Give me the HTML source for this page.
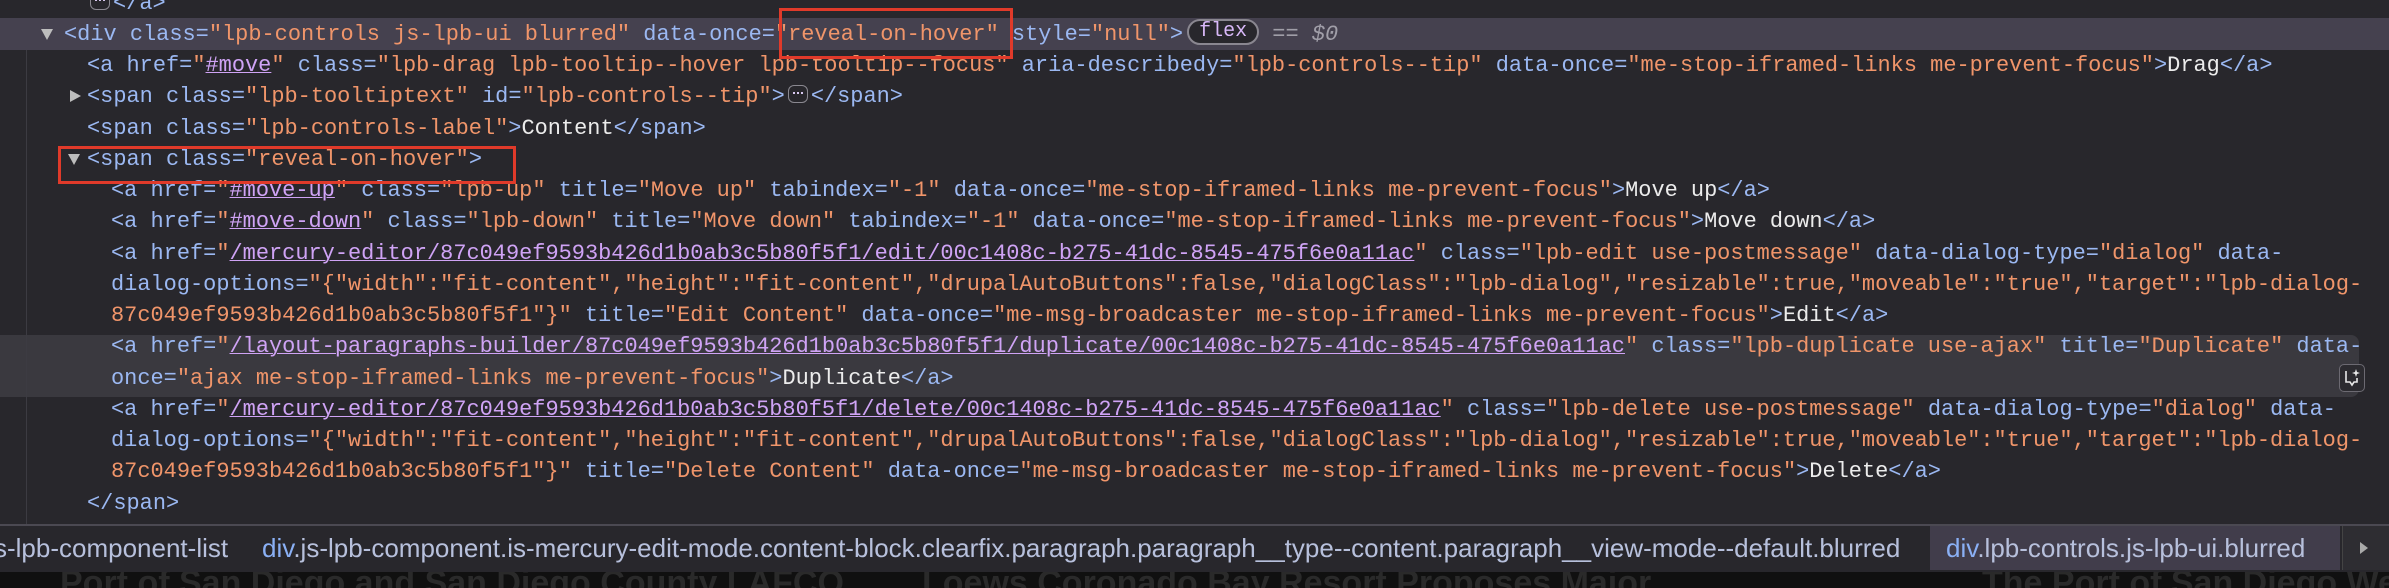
<!DOCTYPE html>
<html><head><meta charset="utf-8"><style>
html,body{margin:0;padding:0;width:2389px;height:588px;overflow:hidden;}
body{background:#28272c;position:relative;font-family:"Liberation Mono",monospace;font-size:21.95px;}
.r{position:absolute;left:0;right:0;height:31.27px;line-height:31.27px;white-space:pre;color:#e6e6e6;}
.t{color:#9bb8f2}.n{color:#9bb8f2}.v{color:#f0956a}.h{color:#cfa3f5;text-decoration:underline;text-decoration-thickness:1px}.x{color:#ececec}
.tri{position:absolute;width:0;height:0;border-left:6px solid transparent;border-right:6px solid transparent;border-top:11px solid #bdbdbd;top:10px}
.trir{position:absolute;width:0;height:0;border-top:6px solid transparent;border-bottom:6px solid transparent;border-left:11px solid #bdbdbd;top:9px}
.ell{display:inline-block;width:20px;height:18px;border:1.5px solid #8a8890;border-radius:6px;vertical-align:middle;position:relative;top:-2px;box-sizing:border-box;margin:0 3px}
.ell::after{content:"";position:absolute;left:4px;top:6px;width:2px;height:2px;background:#d8c8f0;box-shadow:4px 0 0 #d8c8f0,8px 0 0 #d8c8f0}
.box{position:absolute;border:3px solid #e03a2a;box-sizing:border-box}
.bc{position:absolute;top:0;white-space:nowrap}
</style></head><body>
<div style="position:absolute;left:0;right:0;top:18px;height:32px;background:#45414f"></div>
<div style="position:absolute;left:0;right:30px;top:335px;height:62px;background:#3a393f;border-radius:0 8px 8px 0"></div>
<div style="position:absolute;left:26px;top:50px;width:1px;height:475px;background:#3c3b42"></div>

<div class="r" style="top:-12px;left:87px"><span class="ell"></span><span class="t">&lt;/a&gt;</span></div>

<div class="r" style="top:19px"><div class="tri" style="left:41px"></div><span style="position:absolute;left:64px"><span class="t">&lt;div </span><span class="n">class</span><span class="t">=</span><span class="v">"lpb-controls js-lpb-ui blurred"</span> <span class="n">data-once</span><span class="t">=</span><span class="v">"reveal-on-hover"</span> <span class="n">style</span><span class="t">=</span><span class="v">"null"</span><span class="t">&gt;</span><span style="display:inline-block;border:2px solid #8a8790;border-radius:14px;background:#28272c;color:#d8b8f8;font-size:20px;line-height:22px;padding:0 10px;margin-left:4px;vertical-align:middle;position:relative;top:-2px">flex</span><span style="color:#a09ea8"> == <i>$0</i></span></span></div>

<div class="r" style="top:50px;left:87px"><span class="t">&lt;a </span><span class="n">href</span><span class="t">=</span><span class="v">"</span><span class="h">#move</span><span class="v">"</span> <span class="n">class</span><span class="t">=</span><span class="v">"lpb-drag lpb-tooltip--hover lpb-tooltip--focus"</span> <span class="n">aria-describedy</span><span class="t">=</span><span class="v">"lpb-controls--tip"</span> <span class="n">data-once</span><span class="t">=</span><span class="v">"me-stop-iframed-links me-prevent-focus"</span><span class="t">&gt;</span><span class="x">Drag</span><span class="t">&lt;/a&gt;</span></div>

<div class="r" style="top:81px"><div class="trir" style="left:70px"></div><span style="position:absolute;left:87px"><span class="t">&lt;span </span><span class="n">class</span><span class="t">=</span><span class="v">"lpb-tooltiptext"</span> <span class="n">id</span><span class="t">=</span><span class="v">"lpb-controls--tip"</span><span class="t">&gt;</span><span class="ell"></span><span class="t">&lt;/span&gt;</span></span></div>

<div class="r" style="top:113px;left:87px"><span class="t">&lt;span </span><span class="n">class</span><span class="t">=</span><span class="v">"lpb-controls-label"</span><span class="t">&gt;</span><span class="x">Content</span><span class="t">&lt;/span&gt;</span></div>

<div class="r" style="top:144px"><div class="tri" style="left:68px"></div><span style="position:absolute;left:87px"><span class="t">&lt;span </span><span class="n">class</span><span class="t">=</span><span class="v">"reveal-on-hover"</span><span class="t">&gt;</span></span></div>

<div class="r" style="top:175px;left:111px"><span class="t">&lt;a </span><span class="n">href</span><span class="t">=</span><span class="v">"</span><span class="h">#move-up</span><span class="v">"</span> <span class="n">class</span><span class="t">=</span><span class="v">"lpb-up"</span> <span class="n">title</span><span class="t">=</span><span class="v">"Move up"</span> <span class="n">tabindex</span><span class="t">=</span><span class="v">"-1"</span> <span class="n">data-once</span><span class="t">=</span><span class="v">"me-stop-iframed-links me-prevent-focus"</span><span class="t">&gt;</span><span class="x">Move up</span><span class="t">&lt;/a&gt;</span></div>

<div class="r" style="top:206px;left:111px"><span class="t">&lt;a </span><span class="n">href</span><span class="t">=</span><span class="v">"</span><span class="h">#move-down</span><span class="v">"</span> <span class="n">class</span><span class="t">=</span><span class="v">"lpb-down"</span> <span class="n">title</span><span class="t">=</span><span class="v">"Move down"</span> <span class="n">tabindex</span><span class="t">=</span><span class="v">"-1"</span> <span class="n">data-once</span><span class="t">=</span><span class="v">"me-stop-iframed-links me-prevent-focus"</span><span class="t">&gt;</span><span class="x">Move down</span><span class="t">&lt;/a&gt;</span></div>

<div class="r" style="top:238px;left:111px"><span class="t">&lt;a </span><span class="n">href</span><span class="t">=</span><span class="v">"</span><span class="h">/mercury-editor/87c049ef9593b426d1b0ab3c5b80f5f1/edit/00c1408c-b275-41dc-8545-475f6e0a11ac</span><span class="v">"</span> <span class="n">class</span><span class="t">=</span><span class="v">"lpb-edit use-postmessage"</span> <span class="n">data-dialog-type</span><span class="t">=</span><span class="v">"dialog"</span> <span class="n">data-</span></div>
<div class="r" style="top:269px;left:111px"><span class="n">dialog-options</span><span class="t">=</span><span class="v">"{"width":"fit-content","height":"fit-content","drupalAutoButtons":false,"dialogClass":"lpb-dialog","resizable":true,"moveable":"true","target":"lpb-dialog-</span></div>
<div class="r" style="top:300px;left:111px"><span class="v">87c049ef9593b426d1b0ab3c5b80f5f1"}"</span> <span class="n">title</span><span class="t">=</span><span class="v">"Edit Content"</span> <span class="n">data-once</span><span class="t">=</span><span class="v">"me-msg-broadcaster me-stop-iframed-links me-prevent-focus"</span><span class="t">&gt;</span><span class="x">Edit</span><span class="t">&lt;/a&gt;</span></div>

<div class="r" style="top:331px;left:111px"><span class="t">&lt;a </span><span class="n">href</span><span class="t">=</span><span class="v">"</span><span class="h">/layout-paragraphs-builder/87c049ef9593b426d1b0ab3c5b80f5f1/duplicate/00c1408c-b275-41dc-8545-475f6e0a11ac</span><span class="v">"</span> <span class="n">class</span><span class="t">=</span><span class="v">"lpb-duplicate use-ajax"</span> <span class="n">title</span><span class="t">=</span><span class="v">"Duplicate"</span> <span class="n">data-</span></div>
<div class="r" style="top:363px;left:111px"><span class="n">once</span><span class="t">=</span><span class="v">"ajax me-stop-iframed-links me-prevent-focus"</span><span class="t">&gt;</span><span class="x">Duplicate</span><span class="t">&lt;/a&gt;</span></div>

<div class="r" style="top:394px;left:111px"><span class="t">&lt;a </span><span class="n">href</span><span class="t">=</span><span class="v">"</span><span class="h">/mercury-editor/87c049ef9593b426d1b0ab3c5b80f5f1/delete/00c1408c-b275-41dc-8545-475f6e0a11ac</span><span class="v">"</span> <span class="n">class</span><span class="t">=</span><span class="v">"lpb-delete use-postmessage"</span> <span class="n">data-dialog-type</span><span class="t">=</span><span class="v">"dialog"</span> <span class="n">data-</span></div>
<div class="r" style="top:425px;left:111px"><span class="n">dialog-options</span><span class="t">=</span><span class="v">"{"width":"fit-content","height":"fit-content","drupalAutoButtons":false,"dialogClass":"lpb-dialog","resizable":true,"moveable":"true","target":"lpb-dialog-</span></div>
<div class="r" style="top:456px;left:111px"><span class="v">87c049ef9593b426d1b0ab3c5b80f5f1"}"</span> <span class="n">title</span><span class="t">=</span><span class="v">"Delete Content"</span> <span class="n">data-once</span><span class="t">=</span><span class="v">"me-msg-broadcaster me-stop-iframed-links me-prevent-focus"</span><span class="t">&gt;</span><span class="x">Delete</span><span class="t">&lt;/a&gt;</span></div>

<div class="r" style="top:488px;left:87px"><span class="t">&lt;/span&gt;</span></div>

<div style="position:absolute;left:2339px;top:364px;width:26px;height:28px;border:1.5px solid #6c6a72;border-radius:5px;background:#2c2b30;box-sizing:border-box">
<svg width="24" height="26" viewBox="0 0 24 26" style="position:absolute;left:0;top:0"><path d="M6 6 V17 H10 L12 20 L14 17 H17 V13" fill="none" stroke="#e8e8e8" stroke-width="1.6"/><path d="M16 4 L17 7 L20 8 L17 9 L16 12 L15 9 L12 8 L15 7 Z" fill="#e8e8e8"/></svg></div>

<div class="box" style="left:779px;top:8px;width:234px;height:51px"></div>
<div class="box" style="left:58px;top:146px;width:458px;height:38px"></div>

<div style="position:absolute;left:0;right:0;top:524px;height:46px;background:#28272c;border-top:2px solid #4b4952;border-bottom:2px solid #58565e;font-family:'Liberation Sans',sans-serif;font-size:26px;line-height:44px;color:#b7c0dc;overflow:hidden"><span class="bc" style="left:1930px;width:410px;height:44px;background:#413d4b"></span><span class="bc" style="left:-6px">s-lpb-component-list</span><span class="bc" style="left:262px"><span style="color:#8ab0f5">div</span>.js-lpb-component.is-mercury-edit-mode.content-block.clearfix.paragraph.paragraph__type--content.paragraph__view-mode--default.blurred</span><span class="bc" style="left:1946px"><span style="color:#8ab0f5">div</span>.lpb-controls.js-lpb-ui.blurred</span><span class="bc" style="left:2342px;width:47px;height:44px;background:#2e2d32;border-left:1px solid #444"></span><span class="bc" style="left:2360px;top:16px;width:0;height:0;border-top:6px solid transparent;border-bottom:6px solid transparent;border-left:8px solid #aaa"></span></div>
<div style="position:absolute;left:0;right:0;top:572px;height:16px;background:#101010;overflow:hidden;font-family:'Liberation Sans',sans-serif;font-weight:bold;font-size:34px;color:#2a2a2a;white-space:nowrap"><span style="position:absolute;left:60px;top:-8px">Port of San Diego and San Diego County LAFCO</span><span style="position:absolute;left:922px;top:-8px">Loews Coronado Bay Resort Proposes Major</span><span style="position:absolute;left:1982px;top:-8px">The Port of San Diego Welcomes All</span></div>
</body></html>
